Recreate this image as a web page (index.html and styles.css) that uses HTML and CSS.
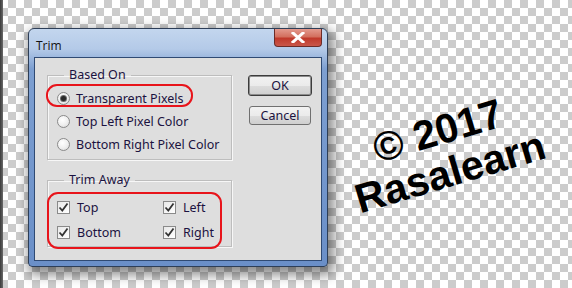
FILE: index.html
```html
<!DOCTYPE html>
<html>
<head>
<meta charset="utf-8">
<link rel="stylesheet" href="styles.css">
</head>
<body>
<div class="canvas">
  <div class="window">
    <div class="titlebar">
      <span class="title">Trim</span>
      <span class="close"><svg width="14" height="11" viewBox="0 0 14 11"><path d="M2 1 L12 10 M12 1 L2 10" stroke="#fff" stroke-width="3" stroke-linecap="square"/></svg></span>
    </div>
    <div class="client">
      <div class="left">
        <fieldset class="group based">
          <legend>Based On</legend>
          <label class="row"><span class="radio on"></span>Transparent Pixels</label>
          <label class="row"><span class="radio"></span>Top Left Pixel Color</label>
          <label class="row"><span class="radio"></span>Bottom Right Pixel Color</label>
        </fieldset>
        <fieldset class="group away">
          <legend>Trim Away</legend>
          <div class="grid">
            <label class="row"><span class="check"><svg width="11" height="11" viewBox="0 0 11 11"><path d="M1.5 5.5 L4.3 8.5 L9.5 1.5" fill="none" stroke="#333" stroke-width="1.8"/></svg></span>Top</label>
            <label class="row"><span class="check"><svg width="11" height="11" viewBox="0 0 11 11"><path d="M1.5 5.5 L4.3 8.5 L9.5 1.5" fill="none" stroke="#333" stroke-width="1.8"/></svg></span>Left</label>
            <label class="row"><span class="check"><svg width="11" height="11" viewBox="0 0 11 11"><path d="M1.5 5.5 L4.3 8.5 L9.5 1.5" fill="none" stroke="#333" stroke-width="1.8"/></svg></span>Bottom</label>
            <label class="row"><span class="check"><svg width="11" height="11" viewBox="0 0 11 11"><path d="M1.5 5.5 L4.3 8.5 L9.5 1.5" fill="none" stroke="#333" stroke-width="1.8"/></svg></span>Right</label>
          </div>
        </fieldset>
      </div>
      <div class="buttons">
        <button class="btn default">OK</button>
        <button class="btn">Cancel</button>
      </div>
      <span class="mark mark1"></span>
      <span class="mark mark2"></span>
    </div>
  </div>
  <div class="watermark">
    <div>© 2017</div>
    <div>Rasalearn</div>
  </div>
</div>
</body>
</html>
```

FILE: styles.css
```css
html, body {
  margin: 0;
  padding: 0;
}
body {
  width: 572px;
  height: 288px;
  overflow: hidden;
}
.canvas {
  position: relative;
  width: 572px;
  height: 288px;
  padding: 28px 0 0 28px;
  box-sizing: border-box;
  background-color: #fff;
  background-image:
    linear-gradient(90deg, #3a3a3a 0, #6a6a6a 3px, transparent 3px),
    linear-gradient(45deg, #cccccc 25%, transparent 25%, transparent 75%, #cccccc 75%),
    linear-gradient(45deg, #cccccc 25%, transparent 25%, transparent 75%, #cccccc 75%);
  background-size: 100% 100%, 16px 16px, 16px 16px;
  background-position: 0 0, 0 0, 8px 8px;
  background-repeat: no-repeat, repeat, repeat;
  font-family: "Noto Sans", "Open Sans", sans-serif;
  font-size: 12px;
  color: #1b1240;
}
.window {
  width: 300px;
  height: 239px;
  box-sizing: border-box;
  border: 1px solid #2d3e57;
  border-radius: 6px 6px 4px 4px;
  background: linear-gradient(180deg, #c3d6ee 0, #b4cae8 20px, #7d9fd1 40px, #6a8fc8 100%);
  box-shadow: 3px 5px 12px 3px rgba(0,0,0,0.45);
  padding: 0 5px 5px 5px;
  display: flex;
  flex-direction: column;
}
.titlebar {
  height: 28px;
  display: flex;
  justify-content: space-between;
  align-items: flex-start;
  flex: none;
}
.title {
  margin: 10px 0 0 2px;
  font-family: "Open Sans", "Noto Sans", sans-serif;
  font-size: 12px;
  line-height: 14px;
  color: #111;
}
.close {
  width: 48px;
  height: 18px;
  margin-right: 0;
  box-sizing: border-box;
  border: 1px solid #6b2b27;
  border-top: none;
  border-radius: 0 0 4px 4px;
  background: linear-gradient(180deg, #e39a8e 0, #d3705f 45%, #c0392b 55%, #c9574a 100%);
  display: flex;
  align-items: center;
  justify-content: center;
}
.client {
  position: relative;
  flex: 1;
  background: #dedede;
  border: 1px solid #2f4a73;
  display: flex;
  align-items: flex-start;
  padding: 9px 0 0 12px;
}
.left {
  width: 185px;
  display: flex;
  flex-direction: column;
  gap: 12px;
}
.group {
  margin: 0;
  padding: 4px 0 3px 9px;
  border: 1px solid #bdbdbd;
  box-shadow: inset 1px 1px 0 #f7f7f7, 1px 1px 0 #f7f7f7;
  min-width: 0;
}
.group legend {
  margin-left: 7px;
  padding: 0 5px;
  line-height: 16px;
  font-size: 12.5px;
}
.row {
  display: flex;
  align-items: center;
  height: 23px;
  gap: 6px;
  font-size: 12.5px;
  white-space: nowrap;
}
.radio {
  width: 13px;
  height: 13px;
  box-sizing: border-box;
  border-radius: 50%;
  border: 1px solid #8a8a8a;
  background: radial-gradient(circle at 40% 35%, #ffffff 0, #f0f0f0 50%, #d6d6d6 100%);
  display: flex;
  align-items: center;
  justify-content: center;
  flex: none;
}
.radio.on::after {
  content: "";
  width: 5px;
  height: 5px;
  border-radius: 50%;
  background: #2a2a2a;
  box-shadow: 0 0 0 1px #6a6a6a;
}
.away {
  padding-top: 7px;
  padding-bottom: 1px;
}
.grid {
  display: grid;
  grid-template-columns: 106px 70px;
}
.away .row {
  height: 25px;
  gap: 7px;
}
.check {
  width: 13px;
  height: 13px;
  box-sizing: border-box;
  border: 1px solid #8a8a8a;
  background: linear-gradient(135deg, #e8e8e8 0, #ffffff 100%);
  display: flex;
  align-items: center;
  justify-content: center;
  flex: none;
}
.buttons {
  margin-left: 16px;
  margin-top: 8px;
  display: flex;
  flex-direction: column;
  align-items: center;
  gap: 10px;
}
.btn {
  width: 62px;
  height: 19px;
  padding: 0;
  border: 1px solid #707070;
  border-radius: 3px;
  background: linear-gradient(180deg, #f2f2f2 0, #ebebeb 50%, #dddddd 51%, #cfcfcf 100%);
  font-family: "Noto Sans", "Open Sans", sans-serif;
  font-size: 12.5px;
  color: #1b1240;
  line-height: 16px;
}
.btn.default {
  width: 64px;
  height: 21px;
  border: 1px solid #3c3c3c;
  box-shadow: inset 0 0 0 1px #8c8c8c;
}
.mark {
  position: absolute;
  border: 2px solid #e8141b;
  border-radius: 11px;
  box-sizing: border-box;
}
.mark1 {
  left: 11px;
  top: 26px;
  width: 147px;
  height: 23px;
}
.mark2 {
  left: 12px;
  top: 134px;
  width: 175px;
  height: 57px;
}
.watermark {
  position: absolute;
  left: 334px;
  top: 109px;
  width: 220px;
  text-align: center;
  font-family: "Liberation Sans", Arial, sans-serif;
  font-weight: bold;
  font-size: 41px;
  line-height: 43px;
  color: #000;
  transform: rotate(-16.5deg);
}
```
